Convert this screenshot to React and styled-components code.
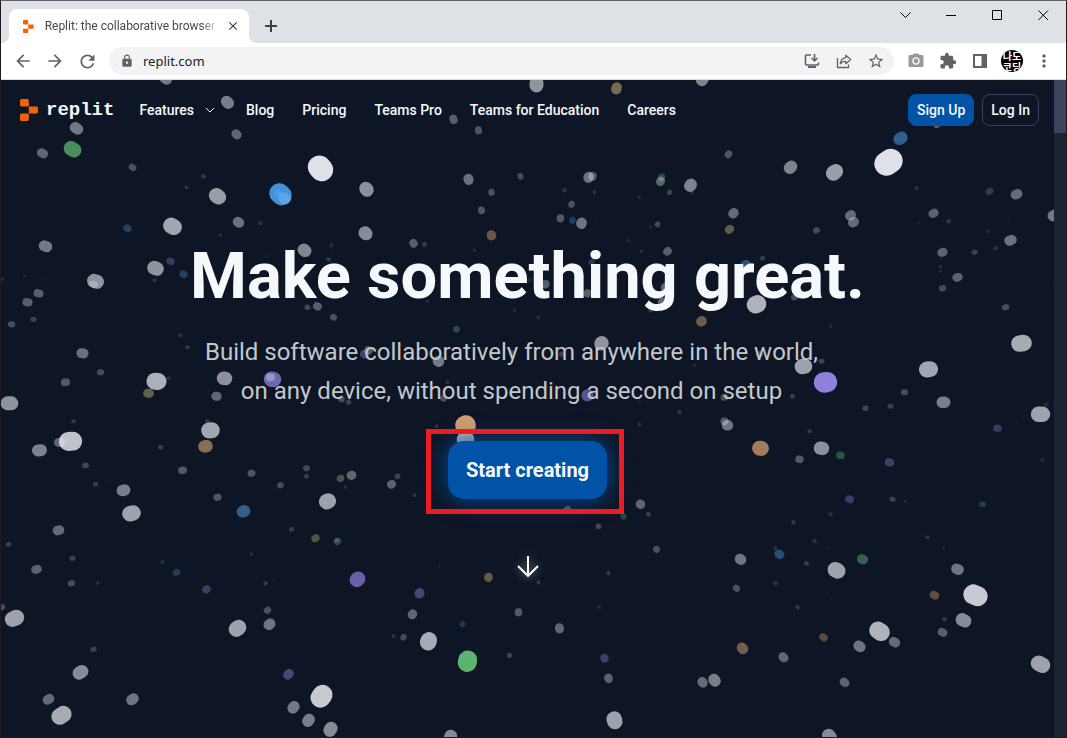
import React, { useState } from "react";
import styled, { createGlobalStyle, css } from "styled-components";
import {
  MdArrowBack,
  MdArrowForward,
  MdClose,
  MdExtension,
  MdLock,
  MdMoreVert,
  MdPhotoCamera,
  MdRefresh,
  MdStarBorder,
} from "react-icons/md";

const sans = `Roboto, "Liberation Sans", sans-serif`;
const chromeSans = `"Noto Sans", "Open Sans", sans-serif`;

const GlobalStyle = createGlobalStyle`
  * {
    box-sizing: border-box;
  }
  body {
    margin: 0;
    font-family: ${sans};
  }
  button, input {
    font: inherit;
  }
`;

const BrowserWindow = styled.div`
  display: flex;
  flex-direction: column;
  min-height: 100vh;
  border: 1px solid #1b1b1b;
  border-top-color: #5f6064;
  background: #ffffff;
`;

/* Browser chrome */

const TabStrip = styled.div`
  display: flex;
  align-items: flex-start;
  height: 42px;
  padding-left: 8px;
  background: #dee1e6;
`;

const Tab = styled.div`
  position: relative;
  display: flex;
  align-items: center;
  align-self: flex-end;
  width: 240px;
  height: 34px;
  padding: 0 7px 0 14px;
  border-radius: 8px 8px 0 0;
  background: #ffffff;
  font-size: 12px;
  color: #45494d;
  &::before,
  &::after {
    content: "";
    position: absolute;
    bottom: 0;
    width: 8px;
    height: 8px;
  }
  &::before {
    right: 100%;
    background: radial-gradient(circle at 0 0, transparent 8px, #ffffff 8px);
  }
  &::after {
    left: 100%;
    background: radial-gradient(circle at 100% 0, transparent 8px, #ffffff 8px);
  }
`;

const TabTitle = styled.span`
  flex: 1;
  margin-left: 11px;
  overflow: hidden;
  white-space: nowrap;
  mask-image: linear-gradient(to right, #000 90%, transparent);
`;

const PlainButton = styled.button`
  display: flex;
  align-items: center;
  justify-content: center;
  padding: 0;
  border: none;
  background: none;
  color: #5f6368;
  cursor: pointer;
`;

const TabClose = styled(PlainButton)`
  width: 18px;
  height: 18px;
  margin-left: 5px;
  color: #3c4043;
`;

const NewTab = styled(PlainButton)`
  width: 28px;
  height: 28px;
  margin: 11px 0 0 8px;
  color: #3c4043;
`;

const WindowControls = styled.div`
  display: flex;
  margin-left: auto;
`;

const WindowButton = styled(PlainButton)`
  width: 46px;
  height: 28px;
  color: #000000;
`;

const Toolbar = styled.div`
  display: flex;
  align-items: center;
  height: 37px;
  padding: 0 6px;
  border-bottom: 1px solid #dadce0;
  background: #ffffff;
`;

const ToolButton = styled(PlainButton)`
  flex: none;
  width: 32px;
  height: 28px;
`;

const Omnibox = styled.div`
  display: flex;
  flex: 1;
  align-items: center;
  min-width: 0;
  height: 28px;
  margin: 0 6px;
  padding: 0 2px 0 11px;
  border-radius: 14px;
  background: #f1f3f4;
  color: #5f6368;
`;

const AddressInput = styled.input`
  flex: 1;
  min-width: 0;
  margin-left: 9px;
  padding: 0;
  border: none;
  outline: none;
  background: none;
  font-family: ${chromeSans};
  font-size: 13px;
  color: #202124;
`;

const Avatar = styled.span`
  display: grid;
  place-content: center;
  width: 22px;
  height: 22px;
  overflow: hidden;
  border-radius: 50%;
  background: #000000;
  color: #ffffff;
  font-family: "Noto Sans CJK KR", sans-serif;
  font-size: 10px;
  font-weight: 700;
  line-height: 11px;
`;

/* Web page */

const Viewport = styled.div`
  display: flex;
  flex: 1;
`;

const Page = styled.div`
  position: relative;
  flex: 1;
  min-width: 0;
  overflow: hidden;
  background: #0e1525;
  color: #f5f9fc;
`;

const StarField = styled.svg`
  position: absolute;
  inset: 0;
  width: 100%;
  height: 100%;
`;

const ScrollTrack = styled.div`
  width: 12px;
  background: #1c2333;
`;

const ScrollThumb = styled.div`
  height: 53px;
  background: #3c445c;
`;

const Header = styled.header`
  position: relative;
  display: flex;
  align-items: center;
  padding: 14px 15px 14px 19px;
  font-size: 14px;
  font-weight: 500;
`;

const Brand = styled.a`
  display: flex;
  align-items: center;
  gap: 8px;
  color: inherit;
  font-family: "Liberation Mono", monospace;
  font-size: 19px;
  font-weight: 700;
  line-height: 24px;
  text-decoration: none;
`;

const Nav = styled.nav`
  display: flex;
  flex: 1;
  gap: 28px;
  margin-left: 25px;
`;

const NavLink = styled.a`
  color: inherit;
  line-height: 20px;
  text-decoration: none;
  white-space: nowrap;
`;

const NavMenu = styled(PlainButton)`
  gap: 8px;
  color: inherit;
  line-height: 20px;
`;

const AuthButton = styled.button`
  height: 32px;
  margin-left: 8px;
  padding: 0 8px;
  border: 1px solid #3c445c;
  border-radius: 8px;
  background: #0e1525;
  color: inherit;
  cursor: pointer;
  ${({ $primary }) =>
    $primary &&
    css`
      border-color: #0053a6;
      background: #0053a6;
    `}
`;

const Hero = styled.main`
  position: relative;
  display: flex;
  flex-direction: column;
  align-items: center;
  padding: 96px 16px 64px;
  text-align: center;
`;

const Title = styled.h1`
  margin: 0;
  font-size: 65px;
  font-weight: 700;
  line-height: 80px;
`;

const Subtitle = styled.p`
  margin: 17px 0 0;
  padding-right: 32px;
  color: #c2c8cc;
  font-size: 24px;
  line-height: 39px;
`;

const Highlight = styled.div`
  position: relative;
  margin-top: 30px;
  &::after {
    content: "";
    position: absolute;
    inset: -12px -17px -15px -22px;
    border: 5px solid #ed1c24;
    pointer-events: none;
  }
`;

const StartButton = styled.button`
  display: block;
  height: 58px;
  padding: 0 18px;
  border: none;
  border-radius: 16px;
  background: #0053a6;
  box-shadow: 0 0 24px rgba(0, 83, 166, 0.9);
  color: inherit;
  font-size: 20px;
  font-weight: 700;
  cursor: pointer;
`;

const ScrollHint = styled.a`
  display: flex;
  margin-top: 56px;
  color: #ffffff;
  filter: drop-shadow(0 0 5px rgba(255, 255, 255, 0.5));
`;

const TONES = {
  w: "#f0f4f8",
  g: "#73e187",
  b: "#54adff",
  p: "#a696ff",
  o: "#ffbe7f",
  y: "#fae388",
};

// x, y, diameter, tone (white when left out)
const STARS = [
  [165, 78, 11], [227, 102, 11.5], [76, 128, 11], [236, 134, 9], [536, 84, 14],
  [616, 88, 10.5, "y"], [702, 79, 12], [453, 119, 8], [478, 130, 7], [937, 123, 8],
  [900, 138, 12, "b"], [790, 167, 12], [834, 172, 15], [42, 153, 9],
  [72, 149, 14.5, "g"], [132, 167, 6.5], [320, 168, 23], [203, 176, 4], [186, 187, 3.5],
  [217, 196, 15], [284, 198, 11], [280, 194, 20, "b"], [278, 194, 8, "b"], [238, 222, 10],
  [260, 223, 3.5], [172, 226, 16], [220, 235, 3], [127, 228, 7, "b"], [45, 246, 11],
  [155, 268, 14], [170, 261, 7, "p"], [183, 274, 7, "b"], [154, 280, 3.5],
  [304, 250, 12.5], [331, 245, 4, "p"], [330, 249, 2], [328, 259, 4], [267, 256, 2],
  [95, 281, 14], [93, 284, 7], [24, 276, 2.5], [38, 293, 8], [27, 302, 8], [33, 319, 5],
  [11, 324, 6], [41, 278, 1.5], [317, 306, 8], [307, 307, 5.5], [333, 317, 6.5],
  [180, 335, 3.5], [187, 347, 4], [2, 279, 3], [366, 189, 13.5], [365, 233, 13],
  [468, 179, 10], [520, 176, 6], [491, 192, 6.5], [481, 210, 7], [398, 206, 1.5],
  [491, 235, 9.5, "o"], [413, 243, 8], [424, 244, 4.5], [474, 250, 3], [564, 190, 4.5, "g"],
  [571, 204, 6.5], [560, 218, 7.5], [572, 220, 6.5, "b"], [581, 223, 10.5],
  [588, 177, 10], [592, 176, 8], [594, 192, 3.5], [661, 177, 7, "g"], [660, 181, 8.5],
  [690, 185, 12], [691, 192, 4, "p"], [669, 192, 5], [639, 197, 3], [657, 224, 5.5],
  [650, 227, 2.5], [628, 240, 3, "y"], [641, 251, 3], [667, 251, 8], [591, 262, 6, "p"],
  [529, 280, 4, "b"], [545, 284, 8], [587, 293, 8], [665, 287, 9], [662, 302, 9],
  [650, 310, 4], [427, 301, 3], [514, 310, 3], [538, 317, 4, "p"], [456, 329, 6.5, "g"],
  [595, 221, 1.5], [580, 276, 6], [601, 343, 14], [701, 321, 10, "o"], [728, 154, 7],
  [733, 213, 9.5], [729, 229, 8.5, "y"], [850, 215, 9.5], [853, 222, 9.5], [816, 230, 6],
  [933, 213, 8.5], [948, 221, 4], [916, 188, 3.5], [989, 191, 6.5, "p"], [1016, 194, 9.5],
  [1054, 215, 11], [988, 231, 3.5, "p"], [1010, 240, 10], [995, 248, 3.5], [974, 252, 5],
  [942, 252, 8.5], [918, 223, 2], [1009, 221, 2], [940, 266, 3], [940, 271, 2.5],
  [957, 277, 8.5], [942, 288, 6], [1005, 307, 6], [745, 265, 10, "b"], [762, 258, 4.5],
  [808, 254, 2, "b"], [813, 254, 2, "b"], [756, 304, 17.5], [794, 297, 6], [830, 326, 3],
  [1021, 343, 16.5], [1055, 282, 3], [82, 353, 10], [100, 372, 6], [65, 382, 7.5],
  [156, 381, 17], [148, 393, 9, "y"], [168, 378, 3.5], [224, 378, 13.5], [216, 396, 9],
  [272, 379, 15.5, "p"], [270, 377, 8], [9, 403, 14], [73, 421, 4], [83, 419, 1],
  [70, 441, 19], [59, 442, 9], [39, 450, 12], [210, 430, 16], [207, 421, 4],
  [205, 446, 12.5, "o"], [206, 447, 3, "o"], [160, 447, 4.5], [85, 465, 5.5], [95, 484, 4.5],
  [107, 480, 1.5], [182, 470, 7.5], [123, 490, 11.5], [131, 513, 15.5], [58, 530, 9.5],
  [251, 473, 7], [280, 485, 6], [217, 497, 7], [243, 511, 12, "b"], [306, 468, 6],
  [306, 476, 4.5], [340, 478, 7, "y"], [351, 475, 9], [345, 487, 3], [327, 501, 15.5],
  [291, 529, 4.5], [315, 538, 7.5, "y"], [337, 541, 7, "g"], [336, 540, 4], [341, 399, 6],
  [348, 402, 5], [364, 354, 8.5, "p"], [368, 350, 8], [438, 361, 11], [447, 382, 3.5],
  [511, 352, 5], [561, 354, 5, "y"], [443, 398, 6.5], [587, 395, 12, "p"], [694, 365, 3],
  [639, 402, 2.5], [679, 412, 4], [639, 424, 3.5], [465, 439, 17], [465, 425, 20, "o"],
  [436, 426, 3.5], [391, 484, 8.5], [397, 476, 5.5, "y"], [414, 495, 3.5], [567, 509, 7],
  [640, 504, 9], [648, 514, 4.5], [623, 516, 6, "g"], [598, 526, 5.5], [803, 366, 15.5],
  [825, 382, 20.5, "p"], [821, 361, 5], [928, 369, 16], [904, 392, 6], [943, 402, 11.5],
  [1040, 414, 15.5], [1046, 404, 4, "b"], [724, 397, 7, "y"], [792, 396, 4.5],
  [865, 408, 5.5, "y"], [890, 406, 5, "y"], [724, 421, 7.5], [727, 425, 10.5],
  [809, 431, 4], [760, 448, 15, "o"], [821, 448, 13.5], [799, 459, 7.5],
  [840, 455, 7.5, "g"], [889, 462, 8, "p"], [997, 428, 7, "p"], [1016, 422, 1.5],
  [1042, 460, 3.5, "p"], [849, 499, 7.5, "p"], [892, 499, 5], [905, 501, 3, "p"],
  [982, 504, 5.5, "g"], [830, 514, 4, "o"], [793, 522, 4], [927, 537, 3.5], [759, 354, 6],
  [8, 544, 4.5], [36, 569, 8.5], [72, 558, 5], [71, 583, 6], [97, 583, 3],
  [162, 562, 4, "p"], [176, 572, 6.5, "b"], [206, 589, 7.5, "p"], [1, 607, 6],
  [14, 618, 15.5], [93, 649, 5], [80, 672, 13], [48, 699, 9.5], [61, 715, 16.5],
  [132, 699, 10.5], [237, 628, 15.5], [267, 610, 6.5], [269, 624, 10.5], [265, 583, 4],
  [273, 580, 2], [251, 554, 3], [288, 674, 9.5, "p"], [321, 696, 20], [293, 707, 11],
  [308, 720, 11.5], [330, 729, 13], [357, 579, 14.5, "p"], [439, 566, 2],
  [488, 577, 8.5, "y"], [538, 582, 4], [419, 593, 9.5, "p"], [412, 614, 9],
  [518, 612, 7.5], [559, 628, 9], [403, 637, 6], [393, 636, 3.5], [428, 641, 16.5],
  [462, 624, 5.5, "b"], [467, 661, 19, "g"], [509, 655, 5], [656, 549, 6.5], [608, 573, 4],
  [599, 607, 3], [604, 658, 8, "p"], [608, 678, 8.5], [614, 720, 15.5], [450, 737, 13],
  [740, 559, 10.5], [736, 588, 6.5], [775, 548, 4, "g"], [779, 554, 9, "b"],
  [775, 583, 4.5, "p"], [814, 541, 4, "o"], [827, 548, 1.5], [806, 563, 4.5],
  [836, 570, 15.5], [862, 559, 9.5, "g"], [797, 607, 4], [831, 599, 1.5], [943, 548, 2.5],
  [957, 569, 10.5], [975, 595, 20], [934, 595, 8, "o"], [963, 620, 13], [944, 619, 4],
  [942, 632, 8], [823, 637, 7.5, "o"], [879, 631, 17.5], [894, 642, 9.5], [859, 646, 10.5],
  [742, 648, 10.5, "o"], [783, 657, 9], [714, 680, 11.5], [702, 682, 9.5], [844, 682, 8.5],
  [1040, 664, 15.5], [829, 736, 13], [888, 162, 24],
];

const CENTER = { x: 527, y: 409 };

// Each star is smeared a little along the line that leads away from the centre.
const Star = ({ x, y, size, tone = "w" }) => {
  const dx = x - CENTER.x;
  const dy = y - CENTER.y;
  const smear = size / 4000;
  return (
    <line
      x1={x - dx * smear}
      y1={y - dy * smear}
      x2={x + dx * smear}
      y2={y + dy * smear}
      stroke={TONES[tone]}
      strokeWidth={size}
      strokeOpacity={Math.min(size * 0.041, 0.92)}
      strokeLinecap="round"
    />
  );
};

const ReplitMark = ({ height }) => (
  <svg height={height} viewBox="0 0 18 22" fill="#f26207" aria-hidden="true">
    <path d="M0 1.5A1.5 1.5 0 0 1 1.5 0h5.8A1.5 1.5 0 0 1 8.8 1.5v5.9H1.5A1.5 1.5 0 0 1 0 5.9z" />
    <path d="M8.8 7.4h7.7A1.5 1.5 0 0 1 18 8.9v4.2a1.5 1.5 0 0 1-1.5 1.5H8.8z" />
    <path d="M0 16.1a1.5 1.5 0 0 1 1.5-1.5h7.3v5.9A1.5 1.5 0 0 1 7.3 22H1.5A1.5 1.5 0 0 1 0 20.5z" />
  </svg>
);

const InstallIcon = () => (
  <svg width="16" height="16" viewBox="0 0 16 16" fill="none" stroke="#5f6368" aria-hidden="true">
    <path d="M7 2H2.5a1 1 0 0 0-1 1v8a1 1 0 0 0 1 1h11a1 1 0 0 0 1-1V9.5" strokeWidth="1.6" />
    <path d="M10.5 1v6.5M7.6 5l2.9 2.9L13.4 5" strokeWidth="1.6" />
    <path d="M4 14h8" strokeWidth="2" />
  </svg>
);

const ShareIcon = () => (
  <svg width="16" height="16" viewBox="0 0 16 16" fill="none" stroke="#5f6368" aria-hidden="true">
    <path d="M1.5 5v9.5h11V11.5" strokeWidth="1.3" />
    <path
      d="M9.8 2.3l4.9 4.2-4.9 4.2V8.300C7.3 8.2 5.6 9 4.3 10.9 4.700 7.7 6.5 5.2 9.8 4.700z"
      strokeWidth="1.3"
      strokeLinejoin="round"
    />
  </svg>
);

const PanelIcon = () => (
  <svg width="14" height="14" viewBox="0 0 14 14" aria-hidden="true">
    <path fill="#5f6368" fillRule="evenodd" d="M0 0h14v14H0zM2 2h6.5v10H2z" />
  </svg>
);

const controls = [
  { label: "Search tabs", d: "M0.5 3.5l5 5 5-5" },
  { label: "Minimize", d: "M0 6.5h10" },
  { label: "Maximize", d: "M0.5 1.5h9v9h-9z" },
  { label: "Close", d: "M0.5 1.5l9.5 9.5M10 1.5L0.5 11" },
];

const links = ["Blog", "Pricing", "Teams Pro", "Teams for Education", "Careers"];

const BrowserChrome = () => {
  const [address, setAddress] = useState("replit.com");

  return (
    <>
      <TabStrip>
        <Tab>
          <ReplitMark height={13} />
          <TabTitle>Replit: the collaborative browser</TabTitle>
          <TabClose aria-label="Close tab">
            <MdClose size={14} />
          </TabClose>
        </Tab>
        <NewTab aria-label="New tab">
          <svg width="12" height="12" stroke="currentColor" strokeWidth="2" aria-hidden="true">
            <path d="M6 0v12M0 6h12" />
          </svg>
        </NewTab>
        <WindowControls>
          {controls.map(({ label, d }) => (
            <WindowButton key={label} aria-label={label}>
              <svg width="11" height="12" fill="none" stroke="currentColor" aria-hidden="true">
                <path d={d} />
              </svg>
            </WindowButton>
          ))}
        </WindowControls>
      </TabStrip>
      <Toolbar>
        <ToolButton aria-label="Back">
          <MdArrowBack size={20} />
        </ToolButton>
        <ToolButton aria-label="Forward">
          <MdArrowForward size={20} />
        </ToolButton>
        <ToolButton aria-label="Reload">
          <MdRefresh size={21} />
        </ToolButton>
        <Omnibox>
          <MdLock size={14} />
          <AddressInput
            aria-label="Address"
            value={address}
            onChange={(event) => setAddress(event.target.value)}
          />
          <ToolButton aria-label="Install">
            <InstallIcon />
          </ToolButton>
          <ToolButton aria-label="Share">
            <ShareIcon />
          </ToolButton>
          <ToolButton aria-label="Bookmark">
            <MdStarBorder size={18} />
          </ToolButton>
        </Omnibox>
        <ToolButton aria-label="Screenshot extension">
          <MdPhotoCamera size={18} color="#9a9a9a" />
        </ToolButton>
        <ToolButton aria-label="Extensions">
          <MdExtension size={18} />
        </ToolButton>
        <ToolButton aria-label="Side panel">
          <PanelIcon />
        </ToolButton>
        <ToolButton aria-label="Profile">
          <Avatar>
            <span>나도</span>
            <span>코딩</span>
          </Avatar>
        </ToolButton>
        <ToolButton aria-label="Menu">
          <MdMoreVert size={20} />
        </ToolButton>
      </Toolbar>
    </>
  );
};

const App = () => (
  <BrowserWindow>
    <GlobalStyle />
    <BrowserChrome />
    <Viewport>
      <Page>
        <StarField
          viewBox="0.5 79.7 1053 657"
          preserveAspectRatio="xMidYMin slice"
          aria-hidden="true"
        >
          {STARS.map(([x, y, size, tone]) => (
            <Star key={`${x}-${y}`} x={x} y={y} size={size} tone={tone} />
          ))}
        </StarField>
        <Header>
          <Brand href="#">
            <ReplitMark height={22} />
            replit
          </Brand>
          <Nav>
            <NavMenu>
              Features
              <svg width="16" height="16" fill="none" stroke="currentColor" aria-hidden="true">
                <path d="M4 6l4 4 4-4" />
              </svg>
            </NavMenu>
            {links.map((link) => (
              <NavLink key={link} href="#">
                {link}
              </NavLink>
            ))}
          </Nav>
          <AuthButton $primary>Sign Up</AuthButton>
          <AuthButton>Log In</AuthButton>
        </Header>
        <Hero>
          <Title>Make something great.</Title>
          <Subtitle>
            Build software collaboratively from anywhere in the world,
            <br />
            on any device, without spending a second on setup
          </Subtitle>
          <Highlight>
            <StartButton>Start creating</StartButton>
          </Highlight>
          <ScrollHint href="#" aria-label="Scroll down">
            <svg width="22" height="22" viewBox="0 0 22 22" fill="none" stroke="currentColor">
              <path d="M11 1v20M1 11l10 10 10-10" strokeWidth="2" />
            </svg>
          </ScrollHint>
        </Hero>
      </Page>
      <ScrollTrack>
        <ScrollThumb />
      </ScrollTrack>
    </Viewport>
  </BrowserWindow>
);

export default App;
